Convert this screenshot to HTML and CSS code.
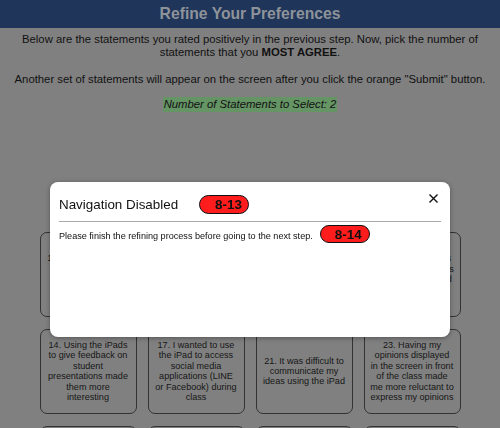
FILE: index.html
```html
<!DOCTYPE html>
<html lang="en">
<head>
<meta charset="utf-8">
<title>Refine Your Preferences</title>
<link rel="stylesheet" href="styles.css">
</head>
<body>
<header class="topbar">
  <h1 class="topbar-title">Refine Your Preferences</h1>
</header>
<main class="content">
  <p class="intro">Below are the statements you rated positively in the previous step. Now, pick the number of statements that you <b>MOST AGREE</b>.</p>
  <p class="intro">Another set of statements will appear on the screen after you click the orange "Submit" button.</p>
  <div class="count"><span class="count-label">Number of Statements to Select: 2</span></div>
  <div class="cards">
    <div class="card">10. I found it easy in class to share my ideas with my classmates</div>
    <div class="card">6. I enjoyed using the iPad during group work</div>
    <div class="card">9. The iPad helped me organize my ideas</div>
    <div class="card">11. Using the iPads made class activities more enjoyable and fun to take part in</div>
    <div class="card">14. Using the iPads to give feedback on student presentations made them more interesting</div>
    <div class="card">17. I wanted to use the iPad to access social media applications (LINE or Facebook) during class</div>
    <div class="card">21. It was difficult to communicate my ideas using the iPad</div>
    <div class="card">23. Having my opinions displayed in the screen in front of the class made me more reluctant to express my opinions</div>
    <div class="card">25. I would like to use the iPad in other classes</div>
    <div class="card">27. The iPad was easy to use</div>
    <div class="card">29. I learned more when using the iPad</div>
    <div class="card">30. I felt comfortable sharing my answers</div>
  </div>
</main>
<div class="backdrop">
  <div class="modal">
    <button class="modal-close" aria-label="Close">
      <svg width="9" height="9" viewBox="0 0 9 9"><path d="M0.5 0.5 L8.5 8.5 M8.5 0.5 L0.5 8.5" stroke="#111" stroke-width="1.4" fill="none"/></svg>
    </button>
    <div class="modal-head">
      <span class="modal-title">Navigation Disabled</span>
      <span class="badge">8-13</span>
    </div>
    <hr class="modal-rule">
    <div class="modal-body">
      <span class="modal-text">Please finish the refining process before going to the next step.</span>
      <span class="badge badge-small">8-14</span>
    </div>
  </div>
</div>
</body>
</html>
```
FILE: styles.css
```css
html, body {
  margin: 0;
  padding: 0;
}
body {
  background: #808080;
  font-family: "Liberation Sans", Arial, sans-serif;
  color: #111;
  overflow: hidden;
  height: 428px;
}
.topbar {
  background: #1f355a;
  height: 28px;
  display: flex;
  justify-content: center;
  align-items: center;
}
.topbar-title {
  margin: 0;
  font-size: 15.7px;
  line-height: 28px;
  font-weight: bold;
  color: #8e939a;
}
.content {
  padding: 5px 8px 0;
  text-align: center;
  font-size: 11.3px;
  line-height: 13px;
}
.intro {
  margin: 0 0 13.7px;
}
.intro + .intro {
  margin-bottom: 11.8px;
}
.count {
  display: flex;
  justify-content: center;
}
.count-label {
  background: #659465;
  font-style: italic;
  line-height: 14.3px;
  padding: 0 1px;
}
.cards {
  display: grid;
  grid-template-columns: repeat(4, 97px);
  column-gap: 11px;
  row-gap: 12px;
  justify-content: center;
  margin-top: 120px;
}
.card {
  box-sizing: border-box;
  height: 85px;
  border: 1px solid #333;
  border-radius: 7px;
  display: flex;
  align-items: center;
  justify-content: center;
  padding: 0 5.7px;
  font-size: 9.1px;
  line-height: 10.4px;
  color: #161616;
}
.backdrop {
  position: fixed;
  inset: 0;
  display: flex;
  justify-content: center;
  align-items: flex-start;
  padding-top: 182px;
}
.modal {
  position: relative;
  box-sizing: border-box;
  width: 400px;
  height: 155px;
  background: #fff;
  border-radius: 8px;
  padding: 13px 9px 0;
  box-shadow: 0 1px 5px rgba(0, 0, 0, 0.35);
}
.modal-close {
  position: absolute;
  top: 12px;
  right: 12px;
  border: 0;
  background: none;
  padding: 0;
  width: 9px;
  height: 9px;
  display: block;
}
.modal-close svg {
  display: block;
}
.modal-head {
  display: flex;
  align-items: center;
  gap: 21px;
  height: 19px;
}
.modal-title {
  font-size: 13.4px;
  color: #111;
}
.badge {
  box-sizing: border-box;
  width: 50px;
  height: 19px;
  border: 1px solid #111;
  border-radius: 10px;
  background: #ff1c1c;
  color: #111;
  font-weight: bold;
  font-size: 13.5px;
  display: flex;
  align-items: center;
  justify-content: center;
  padding-left: 9px;
}
.badge-small {
  height: 18px;
  padding-left: 7px;
}
.modal-rule {
  margin: 7px 0 0;
  border: 0;
  border-top: 1px solid #aaa;
  height: 0;
}
.modal-body {
  display: flex;
  align-items: center;
  gap: 7px;
  margin-top: 3px;
}
.modal-text {
  font-size: 9.1px;
  padding-top: 4px;
}
```
